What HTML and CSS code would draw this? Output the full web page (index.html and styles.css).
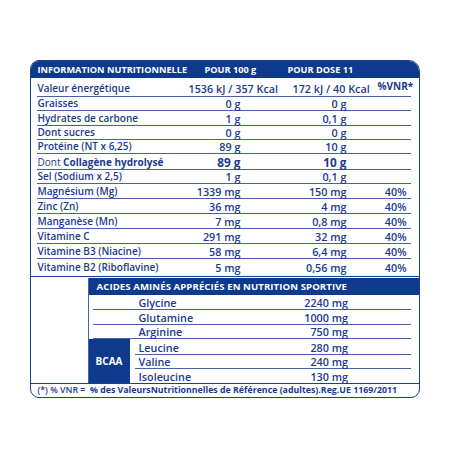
FILE: index.html
```html
<!DOCTYPE html>
<html lang="fr">
<head>
    <meta charset="UTF-8">
    <meta name="viewport" content="width=device-width, initial-scale=1.0">
    <title>Information nutritionnelle</title>
    <link rel="stylesheet" href="styles.css">
</head>
<body>
    <div class="panel">
        <div class="head">
            <span>INFORMATION NUTRITIONNELLE</span>
            <span>POUR 100 g</span>
            <span>POUR DOSE 11</span>
        </div>

        <div class="facts">
            <div class="row energy">
                <span class="label">Valeur énergétique</span>
                <span class="val">1536 kJ / 357 Kcal</span>
                <span class="val">172 kJ / 40 Kcal</span>
                <span class="vnr-head">%VNR*</span>
            </div>
            <div class="row tight"><span class="label">Graisses</span><span class="num">0 g</span><span class="num">0 g</span><span></span></div>
            <div class="row tight"><span class="label">Hydrates de carbone</span><span class="num">1 g</span><span class="num">0,1 g</span><span></span></div>
            <div class="row tight"><span class="label">Dont sucres</span><span class="num">0 g</span><span class="num">0 g</span><span></span></div>
            <div class="row tight"><span class="label">Protéine (NT x 6,25)</span><span class="num">89 g</span><span class="num">10 g</span><span></span></div>
            <div class="row collagen"><span class="label"><span class="light">Dont</span> <b>Collagène hydrolysé</b></span><span class="num">89 g</span><span class="num">10 g</span><span></span></div>
            <div class="row sel"><span class="label">Sel (Sodium x 2,5)</span><span class="num">1 g</span><span class="num">0,1 g</span><span></span></div>
            <div class="row"><span class="label">Magnésium (Mg)</span><span class="num">1339 mg</span><span class="num">150 mg</span><span class="num">40%</span></div>
            <div class="row"><span class="label">Zinc (Zn)</span><span class="num">36 mg</span><span class="num">4 mg</span><span class="num">40%</span></div>
            <div class="row"><span class="label">Manganèse (Mn)</span><span class="num">7 mg</span><span class="num">0,8 mg</span><span class="num">40%</span></div>
            <div class="row"><span class="label">Vitamine C</span><span class="num">291 mg</span><span class="num">32 mg</span><span class="num">40%</span></div>
            <div class="row"><span class="label">Vitamine B3 (Niacine)</span><span class="num">58 mg</span><span class="num">6,4 mg</span><span class="num">40%</span></div>
            <div class="row last"><span class="label">Vitamine B2 (Riboflavine)</span><span class="num">5 mg</span><span class="num">0,56 mg</span><span class="num">40%</span></div>
        </div>

        <div class="amino">
            <div class="amino-side"></div>
            <div class="amino-table">
                <div class="amino-head">ACIDES AMINÉS APPRÉCIÉS EN NUTRITION SPORTIVE</div>
                <div class="arow"><span>Glycine</span><span>2240 mg</span></div>
                <div class="arow"><span>Glutamine</span><span>1000 mg</span></div>
                <div class="arow short"><span>Arginine</span><span>750 mg</span></div>
                <div class="bcaa">
                    <div class="bcaa-tag">BCAA</div>
                    <div class="bcaa-rows">
                        <div class="arow first"><span>Leucine</span><span>280 mg</span></div>
                        <div class="arow short"><span>Valine</span><span>240 mg</span></div>
                        <div class="arow short end"><span>Isoleucine</span><span>130 mg</span></div>
                    </div>
                </div>
            </div>
        </div>

        <div class="foot">
            <span class="light">(*) % VNR =</span>&nbsp; % des ValeursNutritionnelles de Référence (adultes).Reg.UE 1169/2011
        </div>
    </div>
</body>
</html>
```

FILE: styles.css
```css
body {
    margin: 0;
    padding: 60px 0 0 30px;
    background-color: #fff;
    font-family: "Open Sans", "Liberation Sans", Arial, sans-serif;
    color: #1b3a8b;
}

.panel {
    width: 390px;
    box-sizing: border-box;
    border: 1.5px solid #1a3f91;
    border-radius: 9px 11px 9px 9px;
    overflow: hidden;
}

.head {
    display: grid;
    grid-template-columns: 167px 83px 1fr;
    align-items: center;
    height: 17px;
    padding-left: 6.5px;
    background-color: #0d3a8d;
    color: #fff;
    font-size: 9.2px;
    font-weight: 700;
    white-space: nowrap;
}

.facts {
    padding: 0 8px 0 5.5px;
}

.row {
    display: grid;
    grid-template-columns: 160px 44px 106px 60px;
    align-items: end;
    box-sizing: border-box;
    height: 15px;
    border-bottom: 1px solid #4862a9;
    font-size: 10px;
    font-weight: 600;
    line-height: 13px;
    white-space: nowrap;
}

.row .label {
    padding-left: 1px;
}

.row .num,
.row .val {
    font-size: 10.8px;
}

.row .num {
    text-align: right;
}

.row.energy {
    grid-template-columns: 152px 104px 85px auto;
    height: 19px;
    padding-bottom: 1px;
}

.vnr-head {
    font-weight: 700;
    font-size: 10px;
    align-self: center;
}

.row.tight {
    height: 14.25px;
}

.row.collagen {
    height: 16px;
}

.row.collagen .num {
    font-size: 11.8px;
    font-weight: 700;
    line-height: 14px;
}

.row.collagen b {
    font-weight: 700;
}

.light {
    font-weight: 400;
}

.row.sel {
    height: 14px;
}

.row.last {
    height: 17px;
    border-bottom: none;
    padding-bottom: 2px;
}

.amino {
    display: grid;
    grid-template-columns: 56.5px 1fr;
    border-top: 1px solid #1a3f91;
    padding-top: 1px;
}

.amino-table {
    border-left: 1px solid #4862a9;
}

.amino-head {
    height: 17px;
    line-height: 17px;
    padding-left: 8px;
    background-color: #0d3a8d;
    color: #fff;
    font-size: 9.6px;
    font-weight: 700;
    letter-spacing: 0.08px;
    white-space: nowrap;
}

.arow {
    display: grid;
    grid-template-columns: 1fr auto;
    align-items: end;
    box-sizing: border-box;
    height: 15px;
    margin: 0 8px 0 4px;
    padding: 0 63px 0 46px;
    border-bottom: 1px solid #4862a9;
    font-size: 10.8px;
    font-weight: 600;
    line-height: 13px;
}

.arow.short {
    height: 14px;
}

.bcaa {
    display: flex;
    height: 44px;
}

.bcaa-tag {
    width: 41px;
    display: flex;
    align-items: center;
    justify-content: center;
    background-color: #0d3a8d;
    color: #fff;
    font-size: 10px;
    font-weight: 700;
}

.bcaa-rows {
    flex: 1;
}

.bcaa-rows .arow {
    padding-left: 4px;
    margin-left: 5px;
}

.bcaa-rows .arow.first {
    height: 16px;
}

.bcaa-rows .arow.end {
    border-bottom: none;
}

.foot {
    height: 13px;
    line-height: 13px;
    padding-left: 6.5px;
    border-top: 1px solid #1a3f91;
    font-size: 8.8px;
    font-weight: 700;
    white-space: nowrap;
}

.foot .light {
    font-weight: 600;
}
```
